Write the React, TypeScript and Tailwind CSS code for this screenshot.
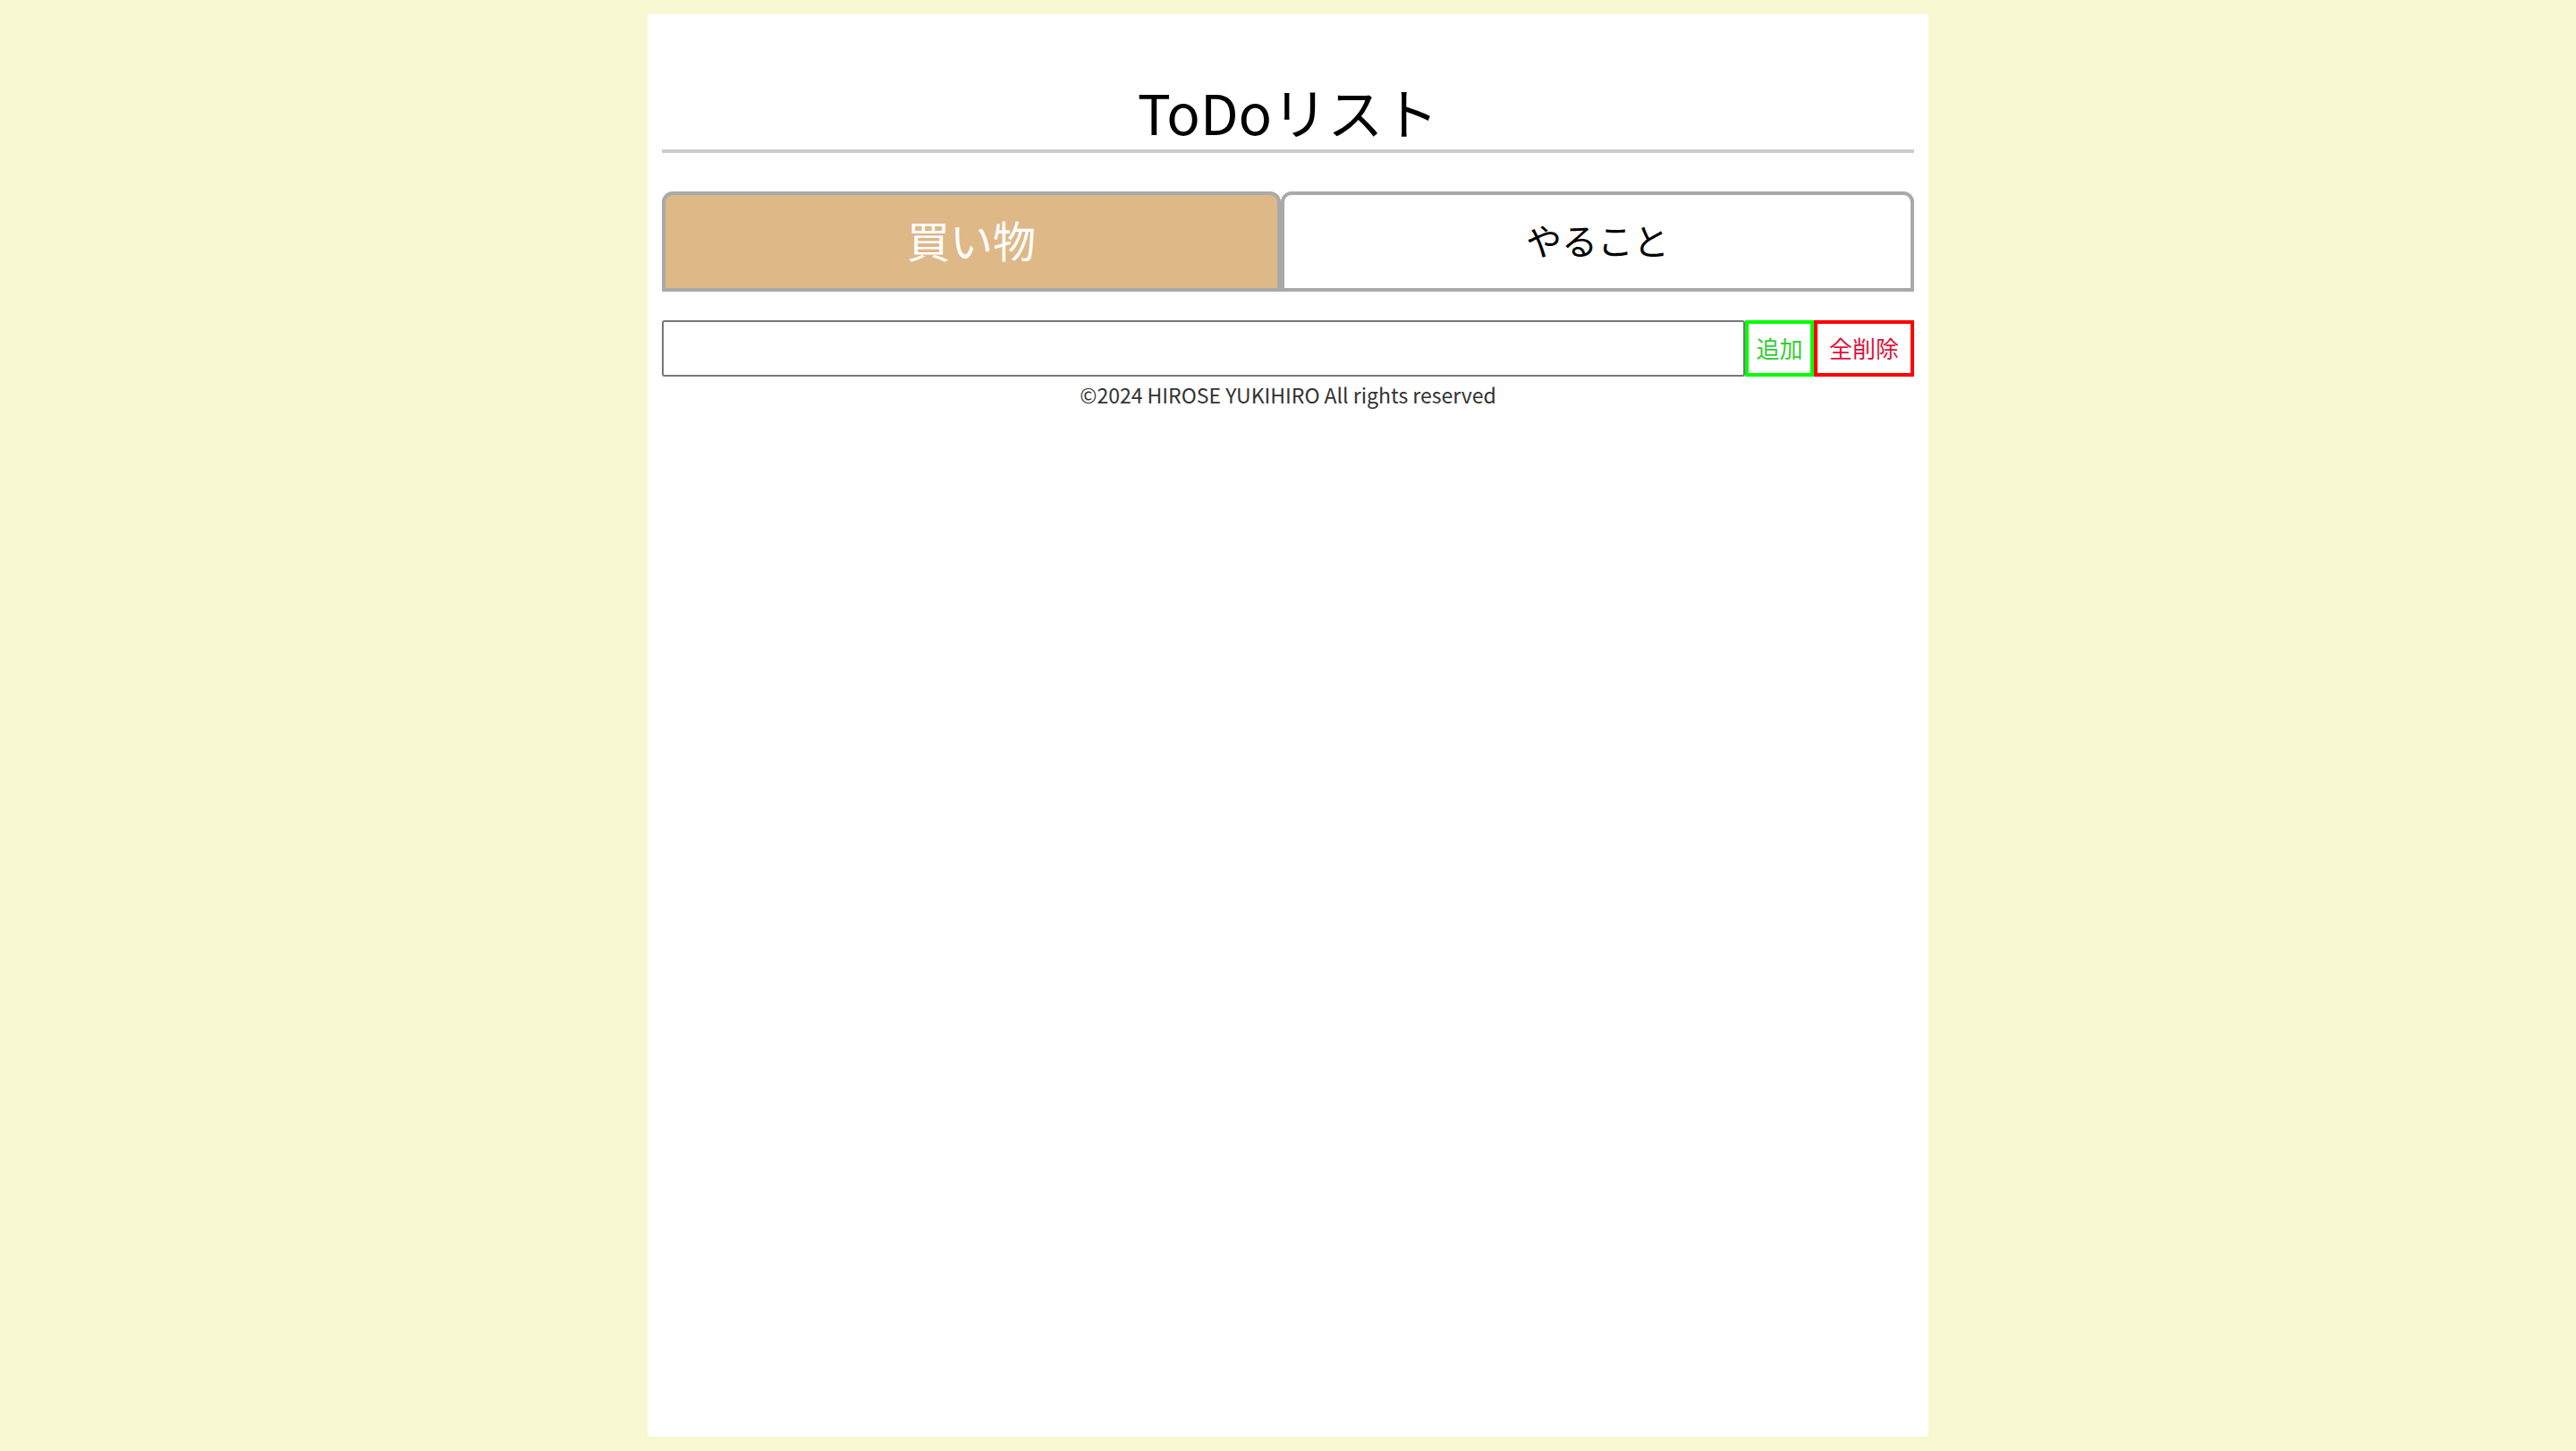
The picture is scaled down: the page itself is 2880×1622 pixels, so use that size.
import { useState } from "react";

const App = () => {
  const [tab, setTab] = useState<"shopping" | "todo">("shopping");
  const [text, setText] = useState("");

  return (
    <main className="min-h-screen bg-[#f8f8d2] py-4 font-['Noto_Sans_CJK_JP','Noto_Sans',sans-serif]">
      <div className="mx-auto h-[1590px] w-[1432px] bg-white px-4">
        {/* Title */}
        <h1 className="pt-[77px] text-center text-[62px] leading-none text-black">ToDoリスト</h1>
        <div className="mt-[12px] h-1 bg-[#cccccc]" />

        {/* Tabs */}
        <div className="mt-[43px] flex">
          <button
            onClick={() => setTab("shopping")}
            className={`h-[112px] w-[692px] shrink-0 rounded-t-[12px] border-4 border-[#a9a9a9] pb-[6px] text-[48px] leading-none ${
              tab === "shopping" ? "bg-[#deb887] text-white" : "bg-white text-black"
            }`}
          >
            買い物
          </button>
          <button
            onClick={() => setTab("todo")}
            className={`h-[112px] flex-1 rounded-t-[12px] border-4 border-[#a9a9a9] pb-[4px] text-[40px] leading-none ${
              tab === "todo" ? "bg-[#deb887] text-white" : "bg-white text-black"
            }`}
          >
            やること
          </button>
        </div>

        {/* Input row */}
        <div className="mt-[32px] flex h-[63px]">
          <input
            value={text}
            onChange={(e) => setText(e.target.value)}
            className="min-w-0 flex-1 rounded-[3px] border-2 border-[#767676] px-2 text-[26px] outline-none"
          />
          <button className="w-[77px] shrink-0 border-4 border-[#00ff00] pb-[2px] text-[26px] leading-none text-[#32cd32]">
            追加
          </button>
          <button className="w-[112px] shrink-0 border-4 border-[#ff0000] pb-[2px] text-[26px] leading-none text-[#dc143c]">
            全削除
          </button>
        </div>

        <p className="mt-[4px] text-center text-[23px] leading-[32px] text-[#333333]">
          ©2024 HIROSE YUKIHIRO All rights reserved
        </p>
      </div>
    </main>
  );
};

export default App;
